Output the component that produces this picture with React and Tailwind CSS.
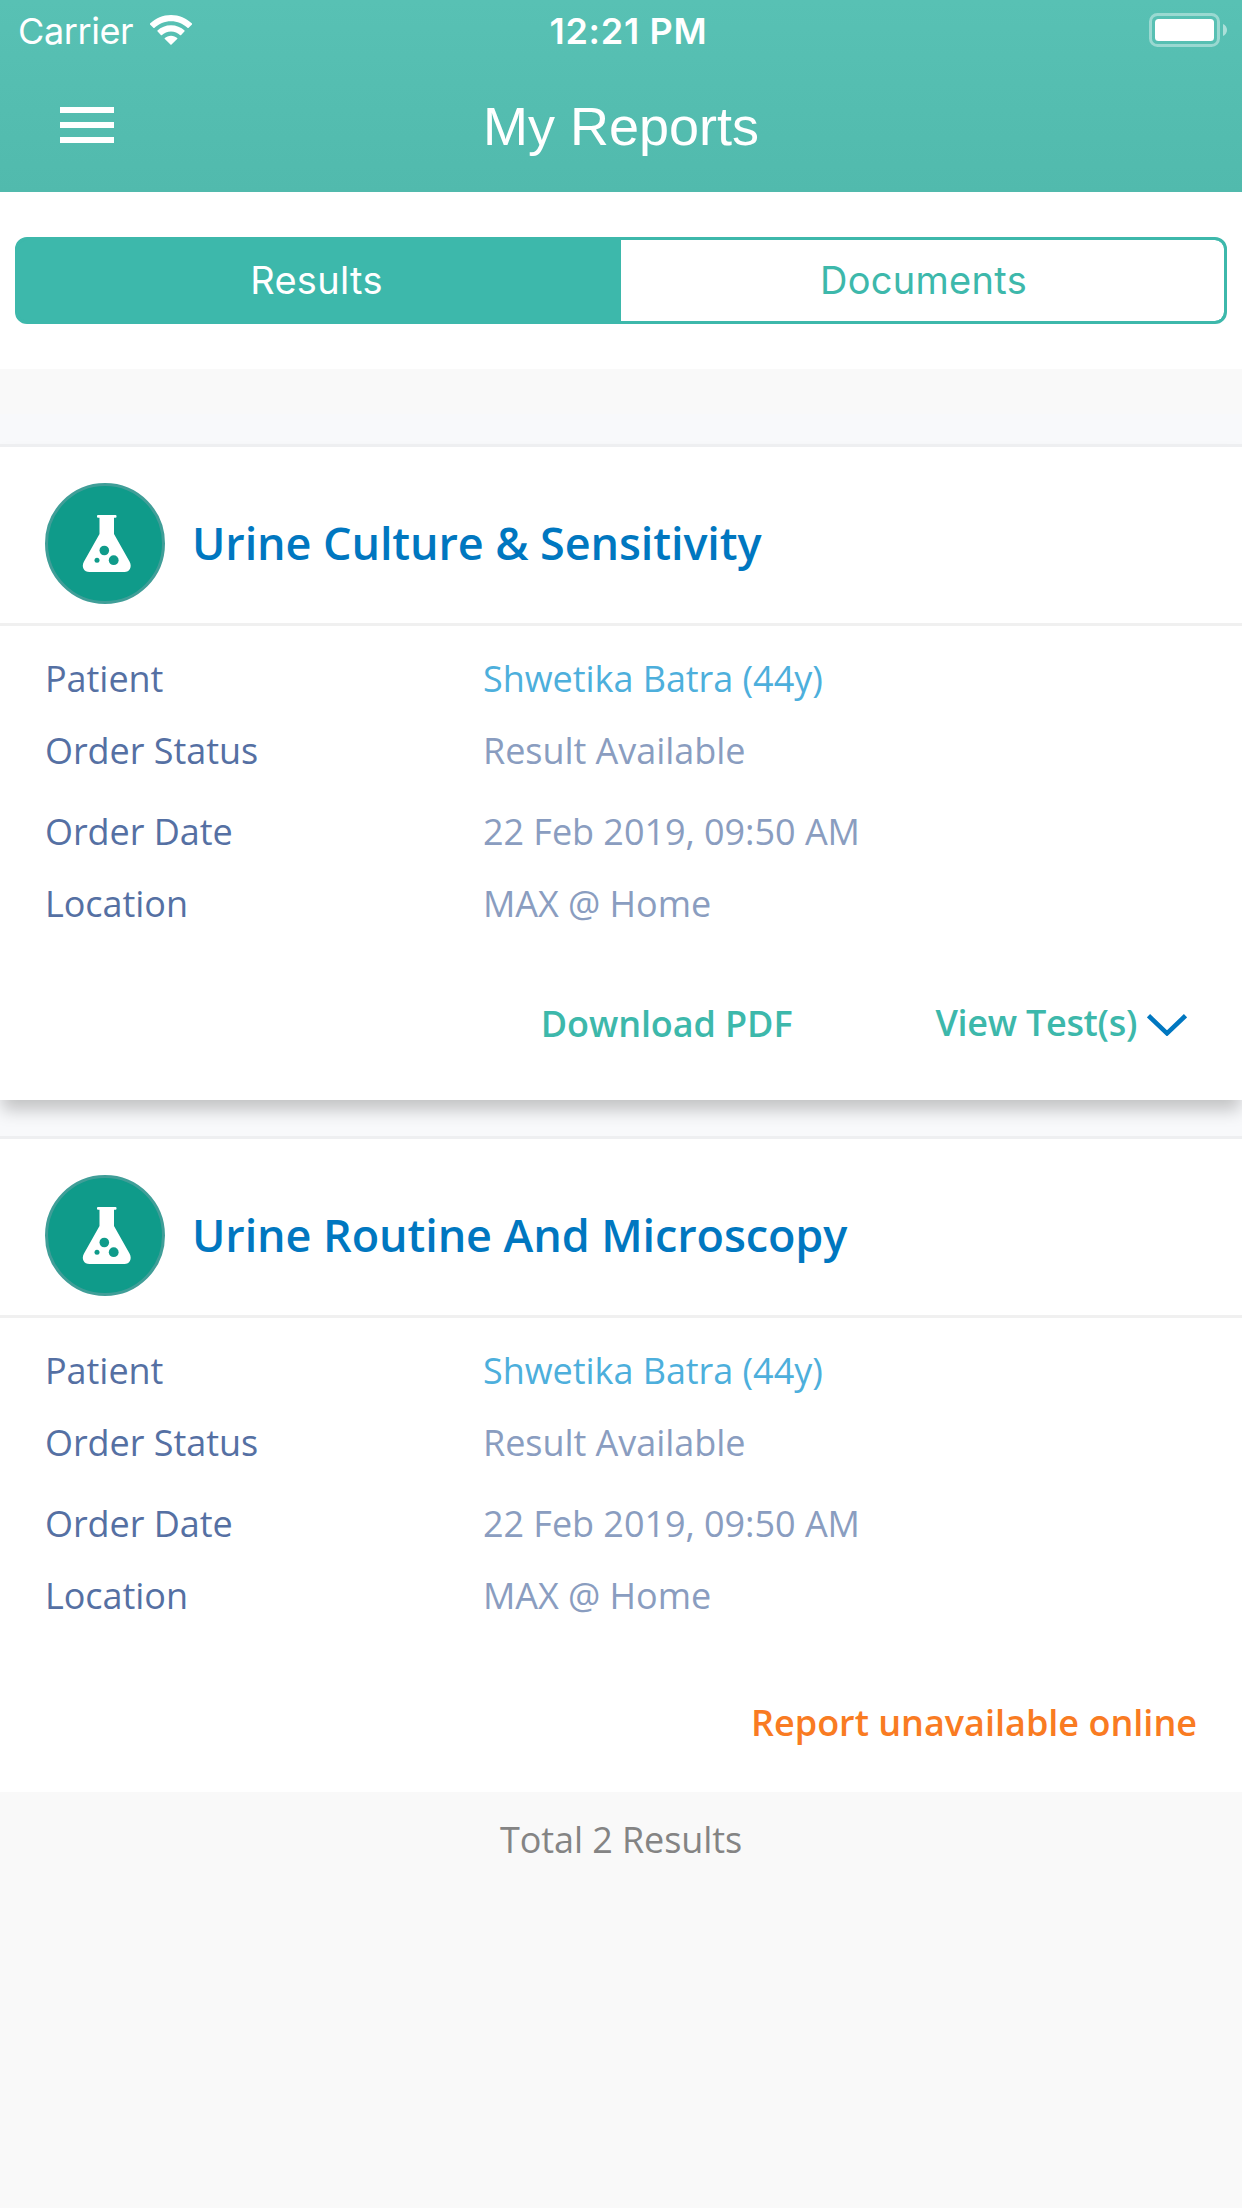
import { useState } from 'react';

const REPORTS = [
  {
    id: 1,
    title: 'Urine Culture & Sensitivity',
    patient: 'Shwetika Batra (44y)',
    status: 'Result Available',
    date: '22 Feb 2019, 09:50 AM',
    location: 'MAX @ Home',
    available: true
  },
  {
    id: 2,
    title: 'Urine Routine And Microscopy',
    patient: 'Shwetika Batra (44y)',
    status: 'Result Available',
    date: '22 Feb 2019, 09:50 AM',
    location: 'MAX @ Home',
    available: false
  }
];

function WifiIcon() {
  return (
    <svg className="h-[30px] w-[42px]" viewBox="0 0 42 30" aria-hidden="true">
      <path
        fill="#fff"
        d="M21 0C13 0 5.6 3.200 0 8.600v.9L3.600 13h.7C8.800 8.900 14.600 6.200 21 6.200S33.200 8.900 37.700 13h.7L42 9.500v-.9C36.400 3.200 29 0 21 0Z"
      />
      <path
        fill="#fff"
        d="M21 10.200c-5.200 0-10 2-13.600 5.400v.7l3.700 3.900h.6c2.500-2.300 5.700-3.700 9.300-3.700s6.800 1.400 9.300 3.700h.6l3.700-3.900v-.7C31 12.200 26.200 10.200 21 10.200Z"
      />
      <path fill="#fff" d="M21 20.800c-2.400 0-4.700.9-6.400 2.400v.5L21 30l6.400-6.300v-.5c-1.700-1.500-4-2.400-6.400-2.400Z" />
    </svg>
  );
}

function BatteryIcon() {
  return (
    <svg className="h-[34px] w-[78px]" viewBox="0 0 78 34" aria-hidden="true">
      <rect x="1.500" y="1.500" width="68" height="31" rx="7" fill="none" stroke="#fff" strokeOpacity="0.4" strokeWidth="3" />
      <rect x="6" y="6" width="59" height="22" rx="3.500" fill="#fff" />
      <path d="M74 11c2.600 1.200 4 3.400 4 6s-1.400 4.800-4 6Z" fill="#fff" fillOpacity="0.5" />
    </svg>
  );
}

function FlaskIcon() {
  return (
    <svg className="h-[121px] w-[120px] shrink-0" viewBox="0 0 120 121" aria-hidden="true">
      <ellipse cx="60" cy="60.500" rx="58.500" ry="59" fill="#0f9b8a" stroke="#409e98" strokeWidth="3" />
      <path
        fill="#fff"
        d="M53 32h17.500a1 1 0 0 1 1 1v.8a1 1 0 0 1-1 1H69V51l15.500 27.500C87.500 84 84.500 89 79.500 89h-35C39 89 36 84 39 78.500L54.500 51V34.800H53a1 1 0 0 1-1-1V33a1 1 0 0 1 1-1Z"
      />
      <circle cx="59.300" cy="67.500" r="4.800" fill="#0f9b8a" />
      <circle cx="52" cy="77.200" r="2.500" fill="#0f9b8a" />
      <circle cx="68.700" cy="77.200" r="4.900" fill="#0f9b8a" />
    </svg>
  );
}

function Chevron() {
  return (
    <svg className="h-[22px] w-10" viewBox="0 0 40 22" aria-hidden="true">
      <path d="M1.500 1.700 20 19.300 38.500 1.700" fill="none" stroke="#0077c0" strokeWidth="4.600" />
    </svg>
  );
}

function Row({ label, value, className = 'text-[#8a9dc0]' }) {
  return (
    <div className="flex h-12 whitespace-nowrap">
      <dt className="w-[438px] text-[#5570a3]">{label}</dt>
      <dd className={className}>{value}</dd>
    </div>
  );
}

function ReportCard({ report }) {
  return (
    <article
      className={
        report.available
          ? 'flex h-[656px] flex-col border-t-3 border-[#eeeff1] bg-white shadow-[0_12px_16px_-2px_rgba(0,0,0,0.22)]'
          : 'flex h-[656px] flex-col border-t-3 border-[#eeeff1] bg-white'
      }
    >
      <header className="flex h-[179px] gap-[27px] border-b-3 border-[#f0f0f0] pl-[45px] pt-9">
        <FlaskIcon />
        <h2 className="pt-[30px] text-[45px] leading-[60px] font-semibold tracking-[-0.1px] whitespace-nowrap text-[#0077c0]">
          {report.title}
        </h2>
      </header>

      <dl className="flex flex-col pt-[29px] pl-[45px] text-[36px] leading-12 tracking-[-0.05px]">
        <Row label="Patient" value={report.patient} className="text-[#4dafdc]" />
        <div className="h-6" />
        <Row label="Order Status" value={report.status} />
        <div className="h-[33px]" />
        <Row label="Order Date" value={report.date} />
        <div className="h-6" />
        <Row label="Location" value={report.location} />
      </dl>

      {report.available ? (
        <div className="flex justify-end pt-[71px] pr-[55px] text-[36px] leading-12 font-semibold whitespace-nowrap text-[#3db8ab]">
          <button className="mt-px mr-[143px] h-12 tracking-[-0.1px]">Download PDF</button>
          <button className="flex h-12 gap-2.5 tracking-[-0.3px]">
            View Test(s)
            <span className="pt-[15px]">
              <Chevron />
            </span>
          </button>
        </div>
      ) : (
        <p className="pt-[79px] pr-[45px] text-right text-[36px] leading-12 font-semibold text-[#f97b22]">
          Report unavailable online
        </p>
      )}
    </article>
  );
}

export default function App() {
  const [tab, setTab] = useState('Results');

  return (
    <div className="h-[2208px] w-[1242px] overflow-hidden bg-[#f9f9f9] font-['Open_Sans','Noto_Sans',sans-serif]">
      <div className="h-[192px] bg-linear-to-b from-[#58c1b4] to-[#51baad] text-white">
        <div className="grid h-[62px] grid-cols-3 font-['Inter',sans-serif] text-[36px] leading-[62px]">
          <div className="flex pl-[18px]">
            <span className="w-[132px] tracking-[-0.4px]">Carrier</span>
            <span className="pt-[15px]">
              <WifiIcon />
            </span>
          </div>
          <span className="pl-[15px] text-center font-semibold tracking-[0.7px]">12:21 PM</span>
          <div className="flex justify-end pt-[13px] pr-[15px]">
            <BatteryIcon />
          </div>
        </div>

        <div className="grid h-[130px] grid-cols-[200px_1fr_200px]">
          <button className="flex flex-col gap-[9px] pt-[45px] pl-15" aria-label="Menu">
            <span className="h-1.5 w-[54px] bg-white" />
            <span className="h-1.5 w-[54px] bg-white" />
            <span className="h-1.5 w-[54px] bg-white" />
          </button>
          <h1 className="pt-8 text-center font-['Liberation_Sans',sans-serif] text-[54px] leading-[64px]">
            My Reports
          </h1>
        </div>
      </div>

      <div className="h-[177px] bg-white px-[15px] pt-[45px]">
        <div className="grid h-[87px] grid-cols-2 overflow-hidden rounded-xl border-3 border-[#3db8ab] bg-[#3db8ab] font-['Inter',sans-serif] text-[38px] tracking-[0.3px]">
          {['Results', 'Documents'].map((name) => (
            <button
              key={name}
              onClick={() => setTab(name)}
              className={
                tab === name
                  ? 'bg-[#3db8ab] pr-1.5 text-white'
                  : 'rounded-r-[9px] bg-white pl-0.5 text-[#3db8ab]'
              }
            >
              {name}
            </button>
          ))}
        </div>
      </div>

      <div className="h-[45px]" />
      <main className="flex flex-col gap-9 bg-[#f8f9fb] pt-[30px]">
        {REPORTS.map((report) => (
          <ReportCard key={report.id} report={report} />
        ))}
      </main>

      <p className="pt-6 text-center text-[36px] leading-12 tracking-[-0.1px] text-[#848484]">
        Total {REPORTS.length} Results
      </p>
    </div>
  );
}
